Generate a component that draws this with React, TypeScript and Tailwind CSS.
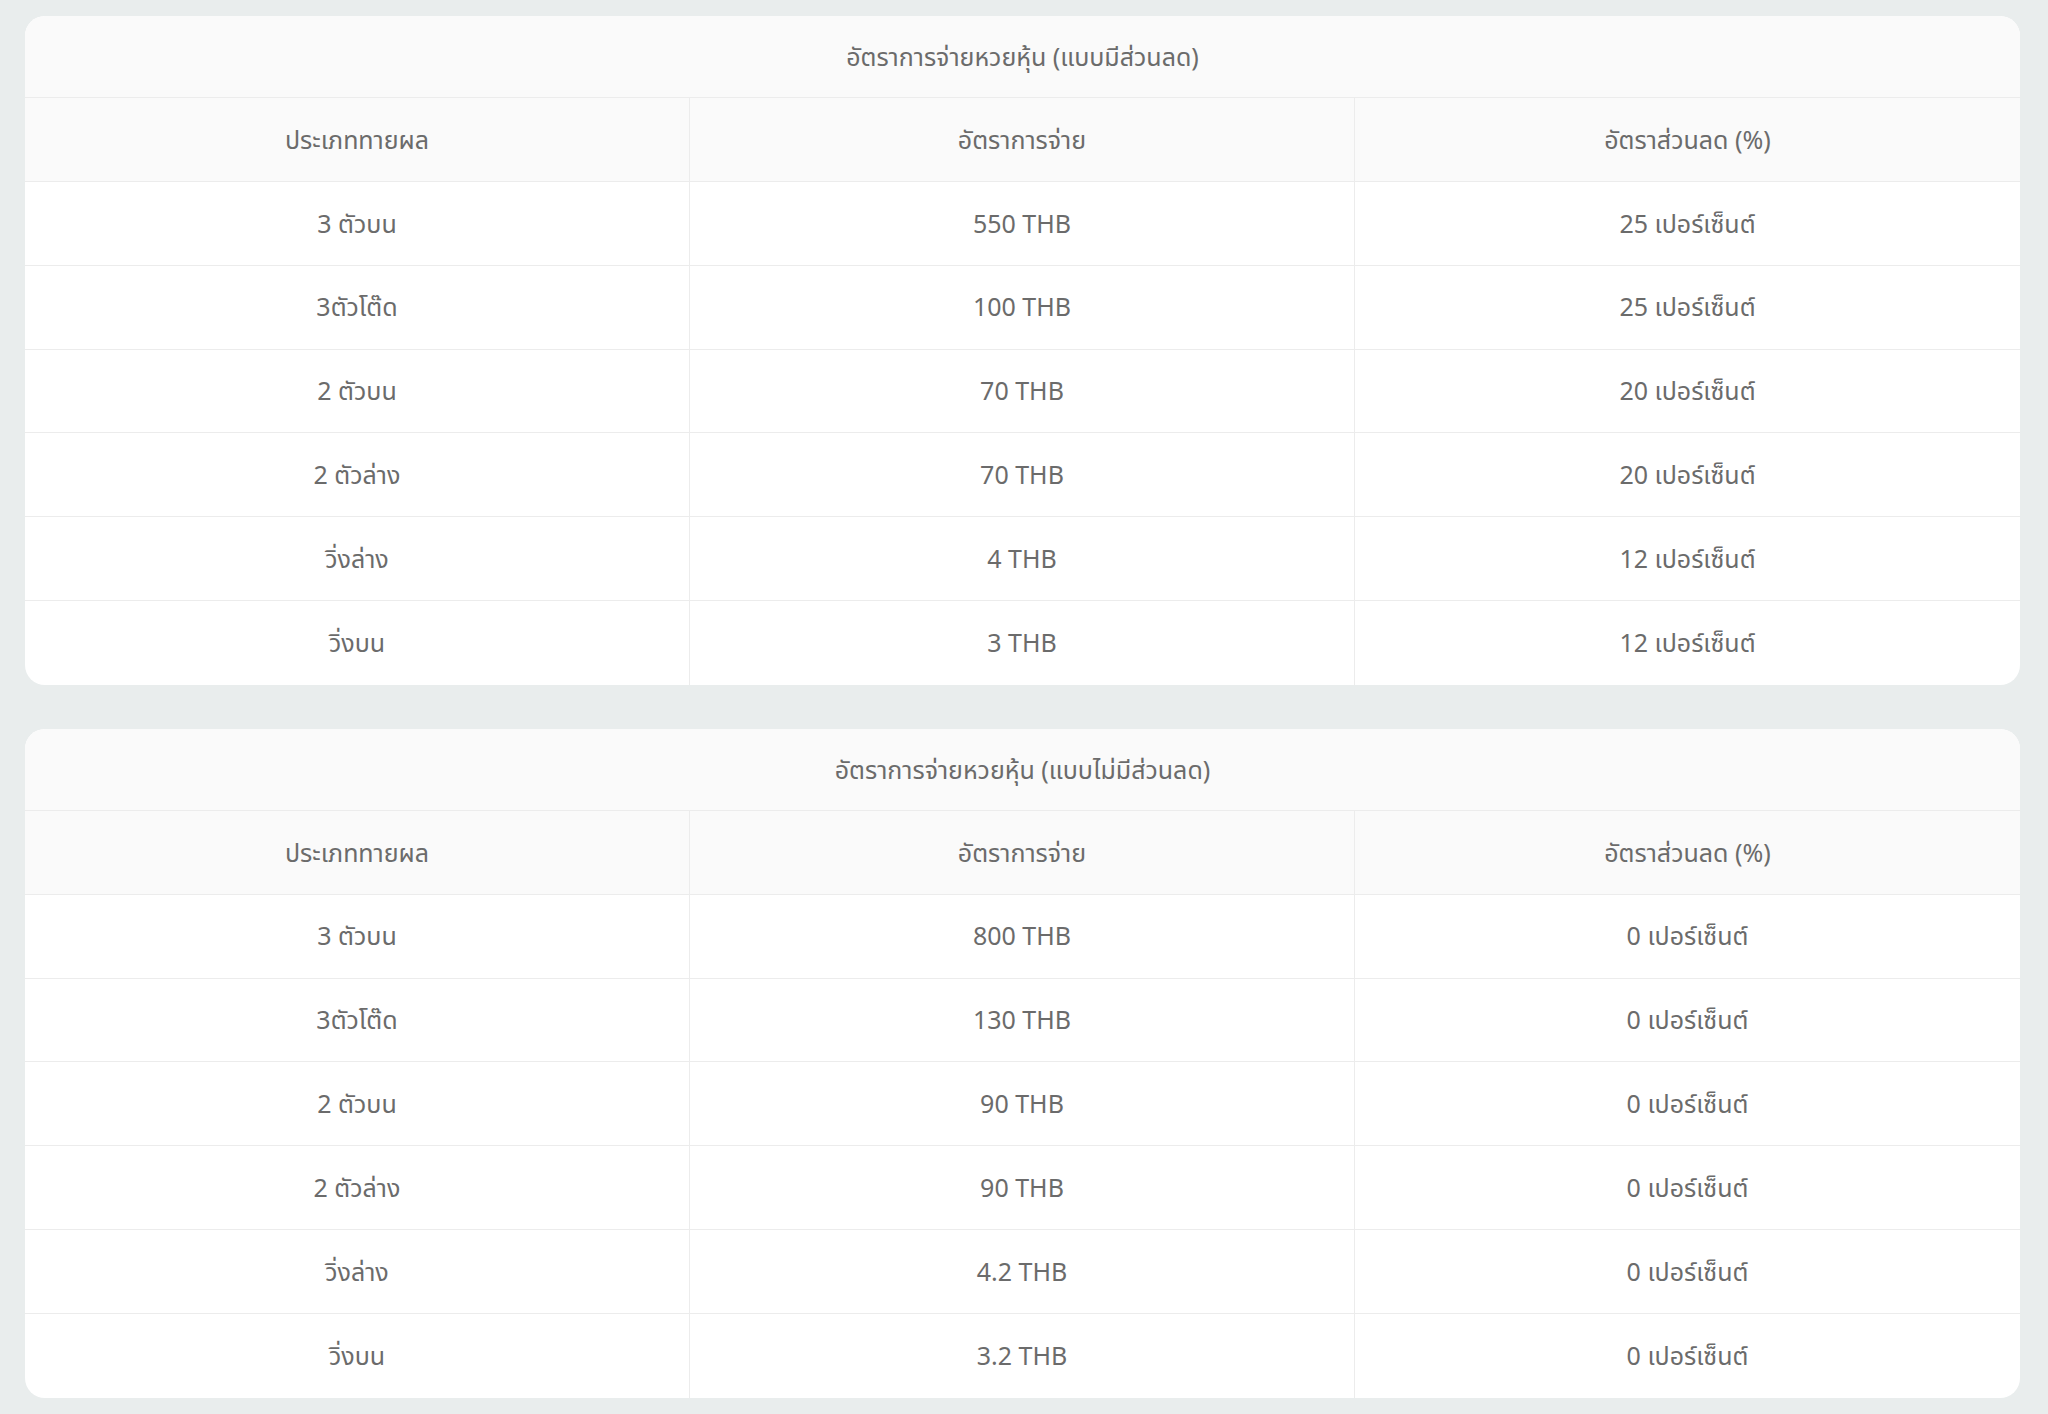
const t1 = [["3 ตัวบน","550 THB","25 เปอร์เซ็นต์"],["3ตัวโต๊ด","100 THB","25 เปอร์เซ็นต์"],["2 ตัวบน","70 THB","20 เปอร์เซ็นต์"],["2 ตัวล่าง","70 THB","20 เปอร์เซ็นต์"],["วิ่งล่าง","4 THB","12 เปอร์เซ็นต์"],["วิ่งบน","3 THB","12 เปอร์เซ็นต์"]];
const t2 = [["3 ตัวบน","800 THB","0 เปอร์เซ็นต์"],["3ตัวโต๊ด","130 THB","0 เปอร์เซ็นต์"],["2 ตัวบน","90 THB","0 เปอร์เซ็นต์"],["2 ตัวล่าง","90 THB","0 เปอร์เซ็นต์"],["วิ่งล่าง","4.2 THB","0 เปอร์เซ็นต์"],["วิ่งบน","3.2 THB","0 เปอร์เซ็นต์"]];

function Card({ title, rows }: { title: string; rows: string[][] }) {
  return (
    <div className="bg-white rounded-[20px] overflow-hidden">
      <div className="h-[82px] flex items-center justify-center bg-[#fafafa] border-b border-[#ececec] text-[25px]">{title}</div>
      <div className="grid grid-cols-3 h-[84px] bg-[#fafafa] border-b border-[#ececec] text-[25px]">
        {["ประเภททายผล","อัตราการจ่าย","อัตราส่วนลด (%)"].map((h, i) => (
          <div key={i} className={"flex items-center justify-center " + (i < 2 ? "border-r border-[#ececec]" : "")}>{h}</div>
        ))}
      </div>
      {rows.map((r, ri) => (
        <div key={ri} className={"grid grid-cols-3 h-[83.8px] text-[25px] " + (ri < rows.length - 1 ? "border-b border-[#ececec]" : "")}>
          {r.map((c, i) => (
            <div key={i} className={"flex items-center justify-center " + (i < 2 ? "border-r border-[#ececec]" : "")}>{c}</div>
          ))}
        </div>
      ))}
    </div>
  );
}

export default function App() {
  return (
    <div className="w-[2048px] h-[1414px] bg-[#e9eded] pl-[25px] pr-[28px] pt-[16px] flex flex-col gap-[44px] text-[#6b6b6b]" style={{ fontFamily: '"Noto Sans", "Noto Sans Thai", "DejaVu Sans", sans-serif' }}>
      <Card title="อัตราการจ่ายหวยหุ้น (แบบมีส่วนลด)" rows={t1} />
      <Card title="อัตราการจ่ายหวยหุ้น (แบบไม่มีส่วนลด)" rows={t2} />
    </div>
  );
}
